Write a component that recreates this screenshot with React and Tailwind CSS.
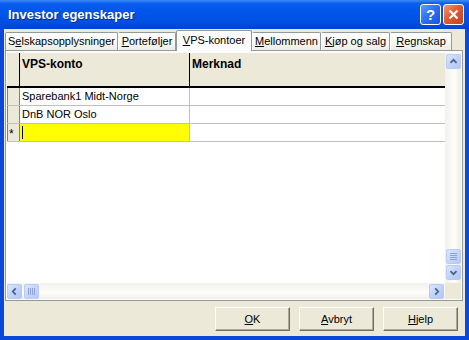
import React from 'react';

const tabs = [
  { pre: 'S', acc: 'e', post: 'lskapsopplysninger', w: 'w-[113px]' },
  { pre: '', acc: 'P', post: 'orteføljer', w: 'w-[58px]' },
  { pre: '', acc: 'V', post: 'PS-kontoer', w: 'w-[76px]', active: true },
  { pre: '', acc: 'M', post: 'ellommenn', w: 'w-[69px]' },
  { pre: '', acc: 'K', post: 'jøp og salg', w: 'w-[69px]' },
  { pre: '', acc: 'R', post: 'egnskap', w: 'w-[62px]' },
];

const rows = ['Sparebank1 Midt-Norge', 'DnB NOR Oslo'];

const Chevron = ({ dir }) => {
  const d = {
    up: 'M4 9 L7.5 5.5 L11 9',
    down: 'M4 6 L7.5 9.5 L11 6',
    left: 'M9 4 L5.5 7.5 L9 11',
    right: 'M6 4 L9.5 7.5 L6 11',
  }[dir];
  return (
    <svg width="15" height="15" viewBox="0 0 15 15">
      <path d={d} fill="none" stroke="#4d6185" strokeWidth="2" />
    </svg>
  );
};

const ScrollBtn = ({ dir }) => (
  <div className="w-[15px] h-[15px] rounded-[2px] border border-[#b9cbf3] bg-[linear-gradient(135deg,#dbe6ff_0%,#c2d3fb_50%,#b2c6f5_100%)] flex items-center justify-center">
    <Chevron dir={dir} />
  </div>
);

const Thumb = ({ vertical }) => (
  <div className="w-[15px] h-[15px] rounded-[2px] border border-[#b9cbf3] bg-[linear-gradient(135deg,#dbe6ff_0%,#c6d6fb_50%,#b6c9f6_100%)] flex items-center justify-center">
    <svg width="9" height="9" viewBox="0 0 9 9">
      {vertical
        ? [1, 3, 5, 7].map((y) => <line key={y} x1="1" x2="8" y1={y + 0.5} y2={y + 0.5} stroke="#8ca2d8" />)
        : [1, 3, 5, 7].map((x) => <line key={x} y1="1" y2="8" x1={x + 0.5} x2={x + 0.5} stroke="#8ca2d8" />)}
    </svg>
  </div>
);

const Btn = ({ acc, rest }) => (
  <div className="w-[75px] h-[24px] bg-[#ece9d8] border border-t-white border-l-white border-r-[#716f64] border-b-[#716f64] shadow-[inset_-1px_-1px_0_#aca899] flex items-center justify-center text-[11px]">
    <span><span className="underline">{acc}</span>{rest}</span>
  </div>
);

export default function App() {
  return (
    <div className="w-[469px] h-[340px] flex flex-col bg-[#0a48da] font-['Liberation_Sans',Arial,sans-serif] text-black overflow-hidden">
      <div className="h-[29px] shrink-0 flex items-center pl-[8px] pr-[5px] bg-[linear-gradient(to_bottom,#3b8cf7_0%,#0a5df0_12%,#0055ea_40%,#0050e2_75%,#0042d0_100%)]">
        <span className="text-white font-bold text-[13px] [text-shadow:1px_1px_0_#0a2a8a]">Investor egenskaper</span>
        <div className="flex-1" />
        <div className="flex gap-[2px]">
          <div className="w-[21px] h-[21px] rounded-[3px] border border-white bg-[linear-gradient(135deg,#5d9bff_0%,#2a6ef5_50%,#1a52df_100%)] flex items-center justify-center text-white font-bold text-[15px] leading-none">?</div>
          <div className="w-[21px] h-[21px] rounded-[3px] border border-white bg-[linear-gradient(135deg,#f09a7a_0%,#e25a2f_45%,#c8401b_100%)] flex items-center justify-center">
            <svg width="11" height="11" viewBox="0 0 11 11">
              <path d="M1.5 1.5 L9.5 9.5 M9.5 1.5 L1.5 9.5" stroke="white" strokeWidth="2.2" />
            </svg>
          </div>
        </div>
      </div>

      <div className="flex-1 flex px-[4px] pb-[4px]">
        <div className="flex-1 flex flex-col bg-[#ece9d8]">
          <div className="h-[21px] flex items-end pl-[1px]">
            {tabs.map((t, i) =>
              t.active ? (
                <div key={i} className={`${t.w} h-[21px] -mb-px relative z-10 bg-[#fcfcfe] border border-b-0 border-[#919b9c] rounded-t-[2px] flex items-center justify-center text-[11px] pb-[2px]`}>
                  <span>{t.pre}<span className="underline">{t.acc}</span>{t.post}</span>
                </div>
              ) : (
                <div key={i} className={`${t.w} h-[18px] bg-[linear-gradient(to_bottom,#ffffff_0%,#f7f7f3_60%,#ecebe5_100%)] border-t border-r border-[#919b9c] ${i === 0 ? 'border-l' : 'border-l border-l-white'} rounded-t-[2px] flex items-center justify-center text-[11px]`}>
                  <span>{t.pre}<span className="underline">{t.acc}</span>{t.post}</span>
                </div>
              )
            )}
          </div>

          <div className="ml-[1px] w-[458px] h-[251px] border border-[#919b9c] bg-[#fcfcfe] pt-[2px] px-[1px] pb-[1px]">
            <div className="w-[454px] h-[246px] flex">
              <div className="w-[438px] flex flex-col">
                <div className="h-[230px] bg-white flex flex-col text-[11px]">
                  <div className="h-[35px] flex bg-[#ece9d8] border-b-2 border-black text-[12px]">
                    <div className="w-[13px] border-r border-black" />
                    <div className="w-[170px] border-r border-black pl-[2px] pt-[2px] font-bold">VPS-konto</div>
                    <div className="flex-1 pl-[2px] pt-[2px] font-bold">Merknad</div>
                  </div>
                  {rows.map((r) => (
                    <div key={r} className="h-[18px] flex border-b border-[#c0c0c0]">
                      <div className="w-[13px] bg-[#ece9d8] border-r border-[#808080] border-l border-l-[#808080]" />
                      <div className="w-[170px] border-r border-[#c0c0c0] pl-[2px] flex items-center">{r}</div>
                      <div className="flex-1" />
                    </div>
                  ))}
                  <div className="h-[18px] flex border-b border-[#c0c0c0]">
                    <div className="w-[13px] bg-[#ece9d8] border-r border-[#808080] border-l border-l-[#808080] flex items-center pl-[1px] text-[12px] leading-none pt-[3px]">*</div>
                    <div className="w-[170px] bg-[#ffff00] border-r border-[#c0c0c0] pl-[2px] flex items-center">
                      <div className="w-px h-[13px] bg-[#000080]" />
                    </div>
                    <div className="flex-1" />
                  </div>
                </div>
                <div className="h-[16px] flex items-center bg-[linear-gradient(to_bottom,#f3f1ec_0%,#fdfdfa_60%,#f0efe8_100%)]">
                  <ScrollBtn dir="left" />
                  <div className="ml-[2px]"><Thumb /></div>
                  <div className="flex-1" />
                  <ScrollBtn dir="right" />
                  <div className="w-[1px]" />
                </div>
              </div>
              <div className="w-[16px] flex flex-col">
                <div className="h-[230px] flex flex-col items-center bg-[linear-gradient(to_right,#f3f1ec_0%,#fdfdfa_60%,#eeede5_100%)] pt-[1px] pb-[3px]">
                  <ScrollBtn dir="up" />
                  <div className="flex-1" />
                  <Thumb vertical />
                  <div className="mt-[1px]"><ScrollBtn dir="down" /></div>
                </div>
                <div className="flex-1 bg-[#ece9d8]" />
              </div>
            </div>
          </div>

          <div className="flex justify-end gap-[9px] pr-[7px] pt-[6px]">
            <Btn acc="O" rest="K" />
            <Btn acc="A" rest="vbryt" />
            <Btn acc="H" rest="jelp" />
          </div>
        </div>
      </div>
    </div>
  );
}
